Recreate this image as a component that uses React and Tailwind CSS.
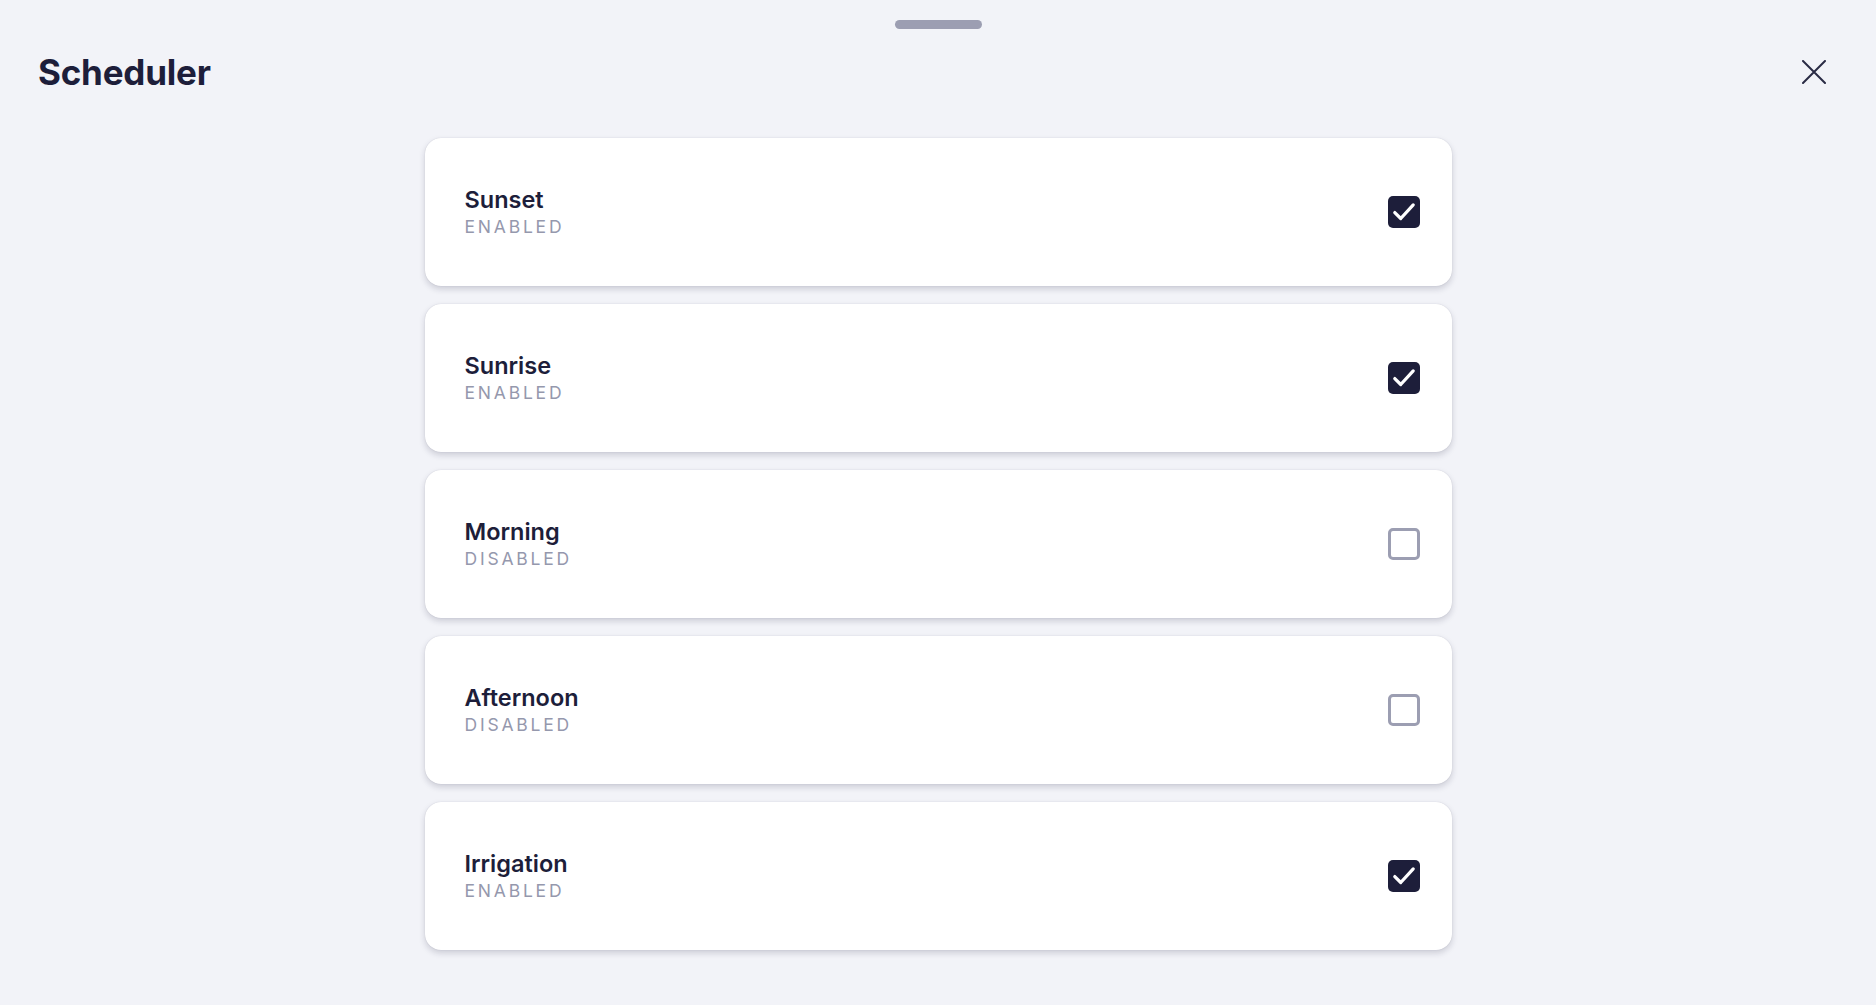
import React from "react";

const items = [
  { name: "Sunset", enabled: true },
  { name: "Sunrise", enabled: true },
  { name: "Morning", enabled: false },
  { name: "Afternoon", enabled: false },
  { name: "Irrigation", enabled: true },
];

function Check({ on }) {
  if (on) {
    return (
      <div className="w-8 h-8 rounded-[5px] bg-[#1d1e3a] flex items-center justify-center">
        <svg width="26" height="26" viewBox="0 0 24 24" fill="none">
          <path d="M3.5 12.5l5.5 5.5L20.5 5.5" stroke="white" strokeWidth="3" strokeLinecap="round" strokeLinejoin="round" />
        </svg>
      </div>
    );
  }
  return <div className="w-8 h-8 rounded-[5px] border-[3px] border-[#9c9eb2] bg-white" />;
}

export default function App() {
  return (
    <div className="min-h-screen bg-[#f2f3f8] text-[#1d1e3a]" style={{ fontFamily: "Inter, 'Noto Sans', sans-serif" }}>
      <div className="flex justify-center pt-5">
        <div className="w-[87px] h-[9px] rounded-full bg-[#9c9eb2]" />
      </div>
      <div className="flex items-center justify-between h-[86px] pl-[38px] pr-[50px]">
        <h1 className="text-[35px] font-bold tracking-[-0.2px] leading-none">Scheduler</h1>
        <svg width="24" height="24" viewBox="0 0 24 24" fill="none">
          <path d="M1 1L23 23M23 1L1 23" stroke="#2a2b45" strokeWidth="2" strokeLinecap="round" />
        </svg>
      </div>
      <div className="mt-[23px] w-[1027px] mx-auto flex flex-col gap-[18px]">
        {items.map((it) => (
          <div
            key={it.name}
            className="h-[148px] bg-white rounded-2xl flex items-center justify-between pl-10 pr-8 shadow-[0_3px_6px_rgba(30,30,60,0.18),0_0_1px_rgba(30,30,60,0.2)]"
          >
            <div className="flex flex-col">
              <span className="text-[23.5px] font-semibold leading-[30px]">{it.name}</span>
              <span className="text-[17.5px] leading-[24px] tracking-[2.8px] text-[#9598ad]">
                {it.enabled ? "ENABLED" : "DISABLED"}
              </span>
            </div>
            <Check on={it.enabled} />
          </div>
        ))}
      </div>
    </div>
  );
}
